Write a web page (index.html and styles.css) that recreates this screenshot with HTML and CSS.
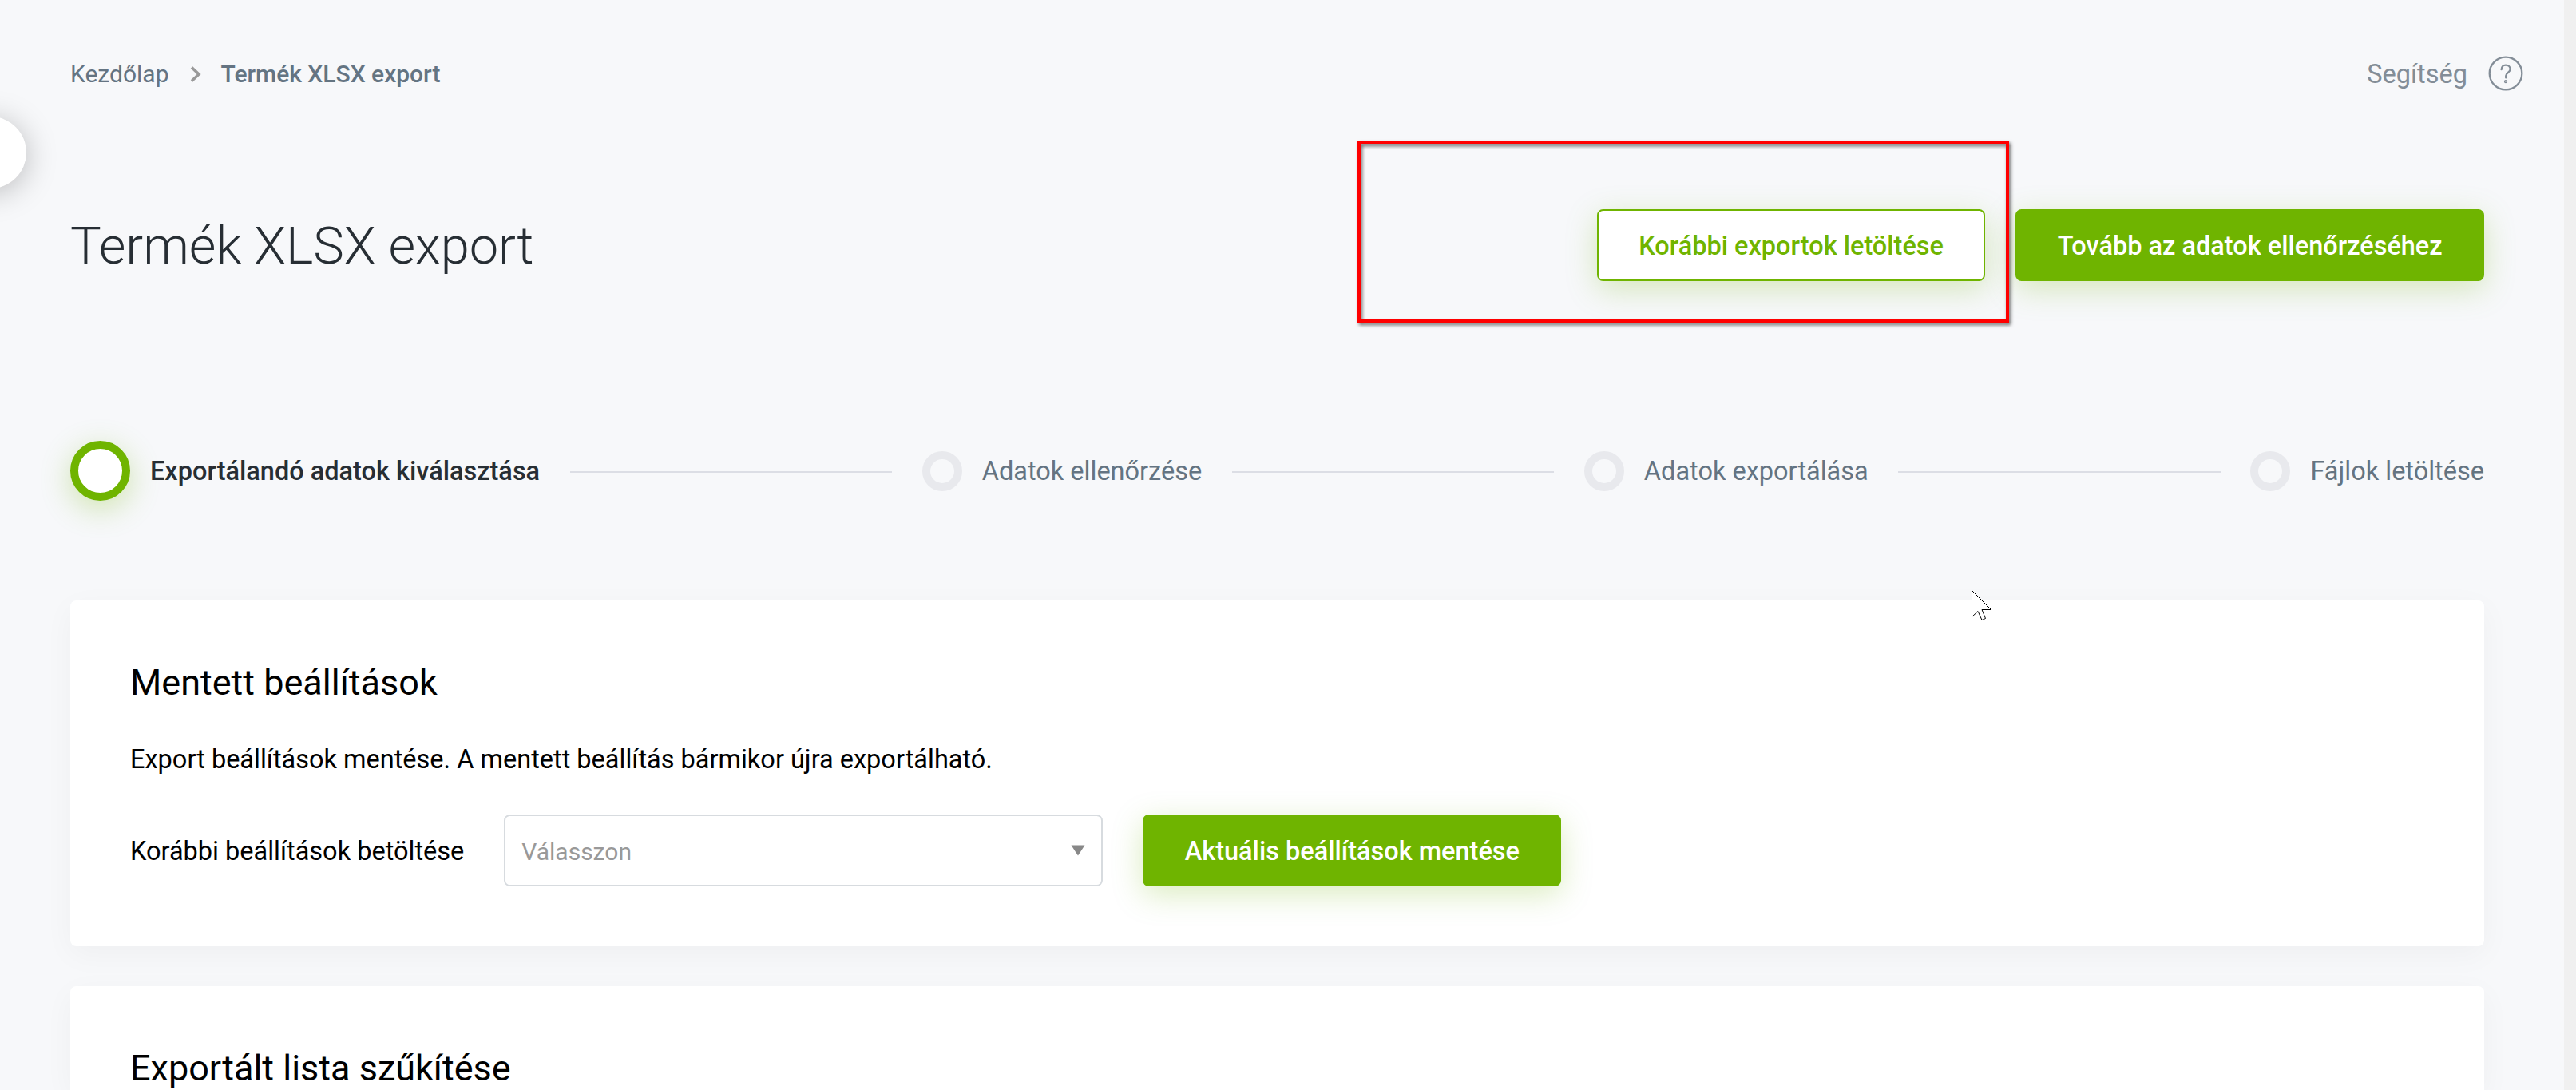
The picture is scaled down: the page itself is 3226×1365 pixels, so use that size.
FILE: index.html
```html
<!DOCTYPE html>
<html lang="hu">
<head>
    <meta charset="UTF-8">
    <meta name="viewport" content="width=device-width, initial-scale=1.0">
    <title>Termék XLSX export</title>
    <link rel="stylesheet" href="styles.css">
</head>
<body>
    <div class="menu-toggle"></div>

    <div class="page">
        <!-- Top bar -->
        <div class="topbar">
            <div class="breadcrumb">
                <a href="#">Kezdőlap</a>
                <svg class="chevron" width="14" height="20" viewBox="0 0 14 20"><path d="M2 1.5L11 10L2 18.5" fill="none" stroke="#999" stroke-width="3.6"/></svg>
                <span class="current">Termék XLSX export</span>
            </div>
            <div class="help">
                <span>Segítség</span>
                <svg width="44" height="44" viewBox="0 0 44 44" fill="none" stroke="#838d97" stroke-width="2.3">
                    <circle cx="22" cy="22" r="20.3"/>
                    <path d="M16.6 17.2C16.6 13.6 19 11.6 22 11.6C25.2 11.6 27.7 13.8 27.7 16.8C27.7 21 22.2 21 22.2 25V27.4" stroke-linecap="round"/>
                    <circle cx="22" cy="32.2" r="1.3" stroke-width="1.6"/>
                </svg>
            </div>
        </div>

        <!-- Page title and buttons -->
        <div class="header">
            <h1>Termék XLSX export</h1>
            <div class="header-buttons">
                <div class="highlight"></div>
                <button class="btn btn-outline">Korábbi exportok letöltése</button>
                <button class="btn">Tovább az adatok ellenőrzéséhez</button>
            </div>
        </div>

        <!-- Steps -->
        <div class="steps">
            <div class="step active"><span class="dot"></span>Exportálandó adatok kiválasztása</div>
            <div class="line"></div>
            <div class="step"><span class="dot"></span>Adatok ellenőrzése</div>
            <div class="line"></div>
            <div class="step"><span class="dot"></span>Adatok exportálása</div>
            <div class="line"></div>
            <div class="step"><span class="dot"></span>Fájlok letöltése</div>
        </div>

        <div class="card">
            <h2>Mentett beállítások</h2>
            <p>Export beállítások mentése. A mentett beállítás bármikor újra exportálható.</p>
            <div class="form-row">
                <label>Korábbi beállítások betöltése</label>
                <div class="select">
                    <span>Válasszon</span>
                    <svg width="18" height="14" viewBox="0 0 18 14"><path d="M0.5 0.5H17.5L9 13.5Z" fill="#888"/></svg>
                </div>
                <button class="btn">Aktuális beállítások mentése</button>
            </div>
        </div>

        <div class="card card-last">
            <h2>Exportált lista szűkítése</h2>
        </div>
    </div>

    <div class="scrollbar"></div>

    <svg class="cursor" width="28" height="42" viewBox="0 0 28 42"><path d="M1.5 1.5V34.5L9 27.5L14 38.5L18.5 36.5L14 25.5H25.5Z" fill="#fff" stroke="#000" stroke-width="1"/></svg>
</body>
</html>
```

FILE: styles.css
```css
* {
    box-sizing: border-box;
}

body {
    margin: 0;
    height: 1365px;
    display: flex;
    overflow: hidden;
    position: relative;
    font-family: Roboto, "Liberation Sans", sans-serif;
    font-size: 32.5px;
    line-height: 40px;
    background: #f7f8fa;
    color: #000;
}

.page {
    flex: 1;
    display: flex;
    flex-direction: column;
    padding: 62px 100px 0 88px;
}

.scrollbar {
    width: 15px;
    background: #f0f0f0;
}

.menu-toggle {
    position: absolute;
    left: -57px;
    top: 146px;
    width: 90px;
    height: 90px;
    border-radius: 50%;
    background: #fff;
    box-shadow: 0 5px 38px rgba(0, 0, 0, 0.25);
}

.topbar {
    display: flex;
    justify-content: space-between;
    align-items: center;
    height: 60px;
    margin-right: -49px;
}

.breadcrumb {
    display: flex;
    align-items: center;
    padding-top: 1px;
    font-size: 30px;
    color: #647482;
}

.breadcrumb a {
    color: #647482;
    text-decoration: none;
}

.chevron {
    margin: 0 25px 0 26px;
}

.current {
    font-weight: 500;
}

.help {
    display: flex;
    align-items: center;
    gap: 26px;
    color: #838d97;
}

.help span {
    padding-top: 1px;
}

.header {
    display: flex;
    justify-content: space-between;
    align-items: center;
    height: 90px;
    margin-top: 140px;
}

h1 {
    margin: 0;
    padding-top: 1px;
    font-size: 65px;
    font-weight: 300;
    line-height: 90px;
    color: #272e34;
}

.header-buttons {
    display: flex;
    gap: 38px;
    position: relative;
}

.btn {
    height: 90px;
    padding: 1px 50px 0;
    border: 2.5px solid #6fb400;
    border-radius: 7.5px;
    background: #6fb400;
    color: #fff;
    font-family: inherit;
    font-size: 32.5px;
    font-weight: 500;
    white-space: nowrap;
    box-shadow: 0 10px 38px rgba(111, 180, 0, 0.25);
}

.header-buttons .btn,
.form-row .btn {
    padding: 1px 50.4px 0;
}

.header-buttons .btn-outline {
    background: #fff;
    color: #6fb400;
}

/* Red frame around the export history button */
.highlight {
    position: absolute;
    left: -300px;
    top: -86px;
    width: 816px;
    height: 228px;
    border: 4px solid #f00;
    filter: drop-shadow(2px 3px 2px rgba(0, 0, 0, 0.6));
}

.steps {
    display: flex;
    align-items: center;
    height: 75px;
    margin-top: 200px;
    color: #647482;
}

.step {
    display: flex;
    align-items: center;
    gap: 25px;
    white-space: nowrap;
}

.dot {
    width: 50px;
    height: 50px;
    border: 10px solid #e8e9ed;
    border-radius: 50%;
}

.step.active {
    font-weight: 500;
    color: #272e34;
}

.step.active .dot {
    width: 75px;
    height: 75px;
    border-color: #6fb400;
    background: #fff;
    box-shadow: 0 10px 38px rgba(111, 180, 0, 0.3);
}

.line {
    flex: 1;
    height: 2px;
    margin: 3px 37.5px 0;
    background: #dcdee5;
}

.card {
    height: 433px;
    padding: 76px 75px 0;
    background: #fff;
    border-radius: 7.5px;
    box-shadow: 0 10px 38px rgba(0, 0, 0, 0.04);
}

.steps + .card {
    margin: 125px 0 50px;
}

.card-last {
    flex: 1;
    height: auto;
    border-radius: 7.5px 7.5px 0 0;
}

h2 {
    margin: 0;
    font-size: 45px;
    font-weight: 400;
    line-height: 54px;
}

p {
    margin: 49px 0;
}

.form-row {
    display: flex;
    align-items: center;
}

.form-row label {
    padding-top: 1px;
}

.select {
    display: flex;
    justify-content: space-between;
    align-items: center;
    width: 750px;
    height: 90px;
    margin: 0 50px;
    padding: 3px 20px 0;
    border: 2px solid #d7dbdf;
    border-radius: 7.5px;
    font-size: 30px;
    color: #999;
}

.select svg {
    margin-bottom: 4px;
}

.cursor {
    position: absolute;
    left: 2468px;
    top: 738px;
}
```
